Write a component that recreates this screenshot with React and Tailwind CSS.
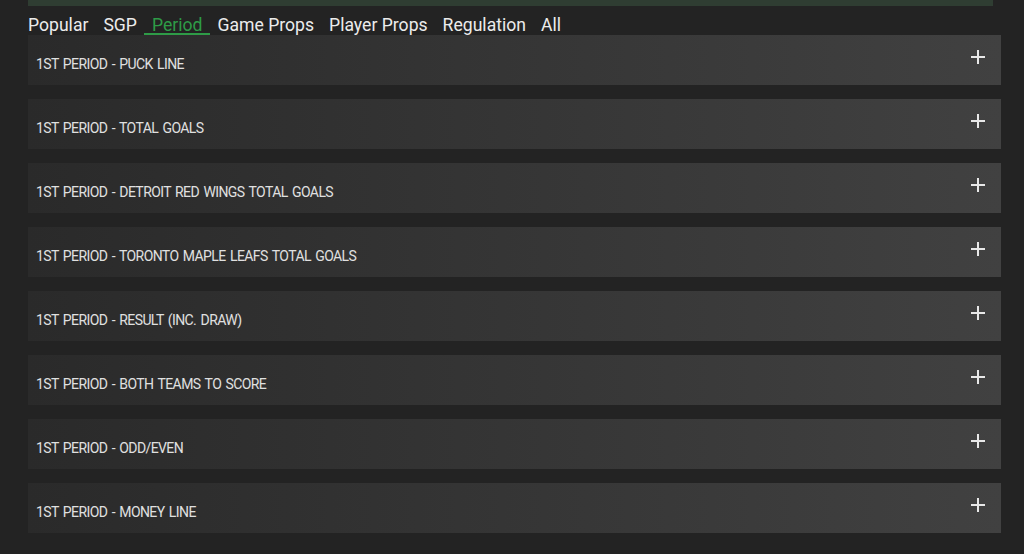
import React, { useState } from "react";

const tabs = ["Popular", "SGP", "Period", "Game Props", "Player Props", "Regulation", "All"];

const markets = [
  "1ST PERIOD - PUCK LINE",
  "1ST PERIOD - TOTAL GOALS",
  "1ST PERIOD - DETROIT RED WINGS TOTAL GOALS",
  "1ST PERIOD - TORONTO MAPLE LEAFS TOTAL GOALS",
  "1ST PERIOD - RESULT (INC. DRAW)",
  "1ST PERIOD - BOTH TEAMS TO SCORE",
  "1ST PERIOD - ODD/EVEN",
  "1ST PERIOD - MONEY LINE",
];

function PlusIcon() {
  return (
    <svg width="16" height="16" viewBox="0 0 16 16" className="text-[#e8e8e8]">
      <path d="M8 1v14M1 8h14" stroke="currentColor" strokeWidth="2" />
    </svg>
  );
}

export default function App() {
  const [active, setActive] = useState("Period");
  const [open, setOpen] = useState(null);

  return (
    <div className="min-h-[554px] w-[1024px] bg-[#232323] font-['Roboto',sans-serif] overflow-hidden">
      <div className="ml-[28px] mr-[31px] h-[6px] bg-[#2f3d32]" />

      {/* market group tabs */}
      <div className="flex h-[29px] items-end pl-[20.5px]">
        {tabs.map((t) => (
          <button
            key={t}
            onClick={() => setActive(t)}
            className={`px-[7.5px] text-[17.6px] leading-[16px] border-b-2 ${
              active === t
                ? "text-[#2e9b47] border-[#2e9b47]"
                : "text-[#ececec] border-transparent"
            }`}
          >
            {t}
          </button>
        ))}
      </div>

      <div className="flex flex-col gap-[14px] pl-[28px] pr-[23px]">
        {markets.map((m) => (
          <div
            key={m}
            onClick={() => setOpen(open === m ? null : m)}
            className="flex h-[50px] cursor-pointer items-center justify-between bg-gradient-to-r from-[#2a2a2a] to-[#414141] pl-[8px] pr-[15px]"
          >
            <span className="pt-[8px] text-[14px] tracking-[-0.6px] [word-spacing:1.5px] text-[#e0e0e0]">{m}</span>
            <span className="-mt-[6px]">
              <PlusIcon />
            </span>
          </div>
        ))}
      </div>
    </div>
  );
}
